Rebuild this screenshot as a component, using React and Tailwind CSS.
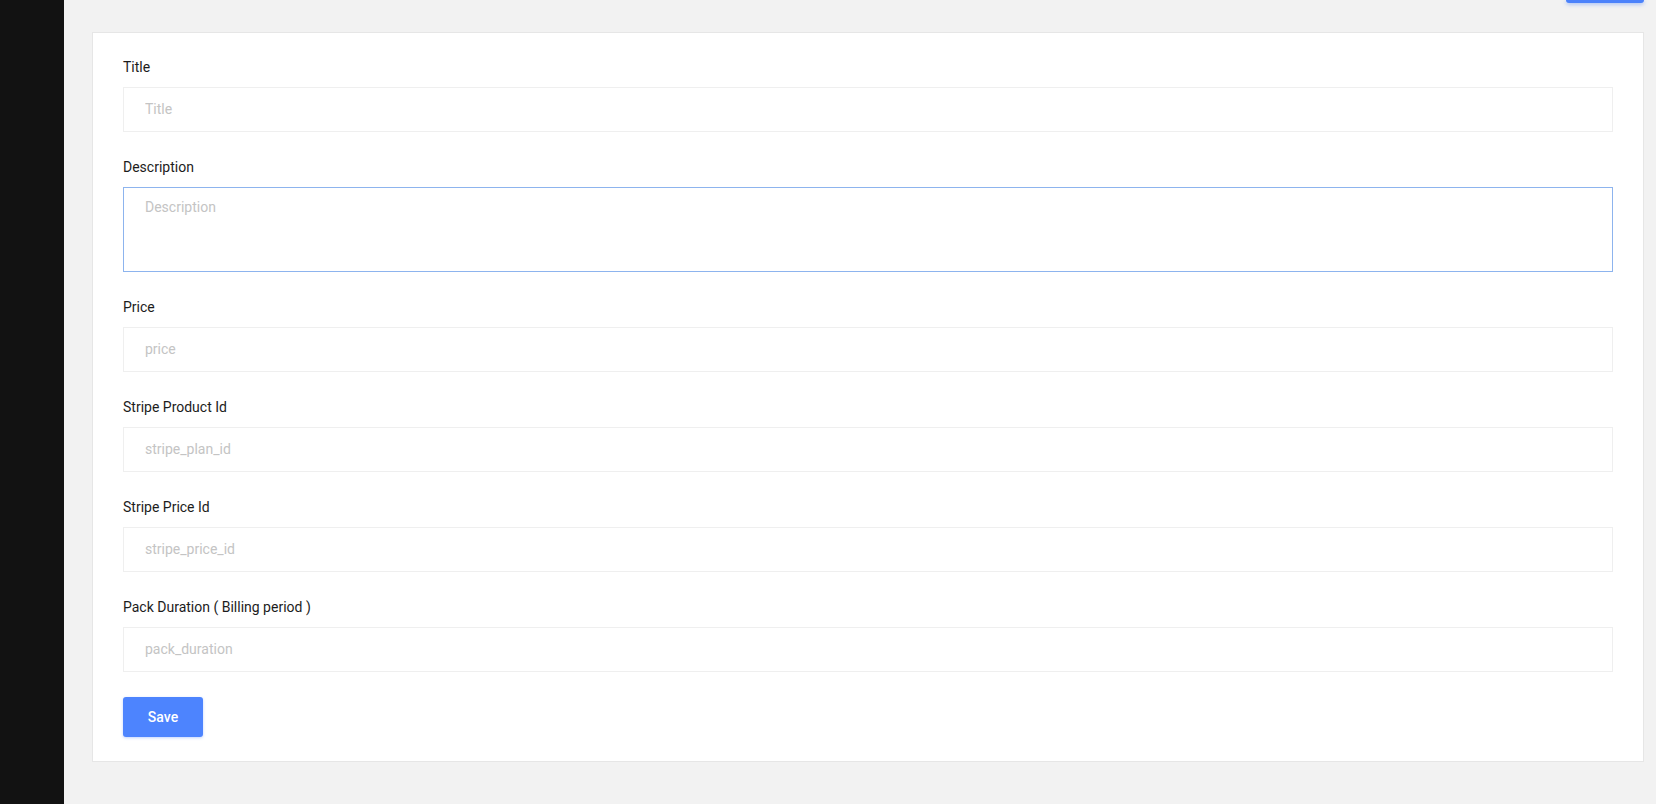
import React from "react";

const fields = [
  { label: "Title", placeholder: "Title" },
  { label: "Description", placeholder: "Description", textarea: true },
  { label: "Price", placeholder: "price" },
  { label: "Stripe Product Id", placeholder: "stripe_plan_id" },
  { label: "Stripe Price Id", placeholder: "stripe_price_id" },
  { label: "Pack Duration ( Billing period )", placeholder: "pack_duration" },
];

const App = () => {
  return (
    <div className="flex h-[804px] w-full overflow-hidden bg-[#f2f2f2] font-['Roboto',sans-serif]">
      {/* SIDEBAR */}
      <div className="w-[64px] shrink-0 bg-[#121212]" />

      {/* MAIN */}
      <div className="flex-1 pl-[28px] pr-[12px]">
        <div className="flex h-[32px] justify-end">
          <div className="h-[3px] w-[78px] rounded-b-[3px] bg-[#4b82fb] shadow-[0_1px_4px_rgba(75,130,251,0.6)]" />
        </div>

        {/* FORM CARD */}
        <div className="border border-[#e6e6e6] bg-white px-[30px] pt-[24px] pb-[24px]">
          {fields.map((f) => (
            <div key={f.label} className="mb-[25px]">
              <label className="mb-[10px] block text-[14px] leading-[20px] text-[#1c1c1c]">
                {f.label}
              </label>
              {f.textarea ? (
                <textarea
                  autoFocus
                  placeholder={f.placeholder}
                  className="block h-[85px] w-full resize-none border border-[#8db4ee] px-[21px] py-[9px] text-[14px] leading-[20px] text-[#333] caret-[#333] outline-none placeholder:text-[#c4c4c4]"
                />
              ) : (
                <input
                  type="text"
                  placeholder={f.placeholder}
                  className="block h-[45px] w-full border border-[#efefef] px-[21px] pb-[2px] text-[14px] text-[#333] outline-none placeholder:text-[#c4c4c4]"
                />
              )}
            </div>
          ))}

          <button className="h-[40px] w-[80px] rounded-[3px] bg-[#4d84fe] text-[14px] font-medium text-white shadow-[0_1px_3px_rgba(77,132,254,0.35)]">
            Save
          </button>
        </div>
      </div>
    </div>
  );
};

export default App;
